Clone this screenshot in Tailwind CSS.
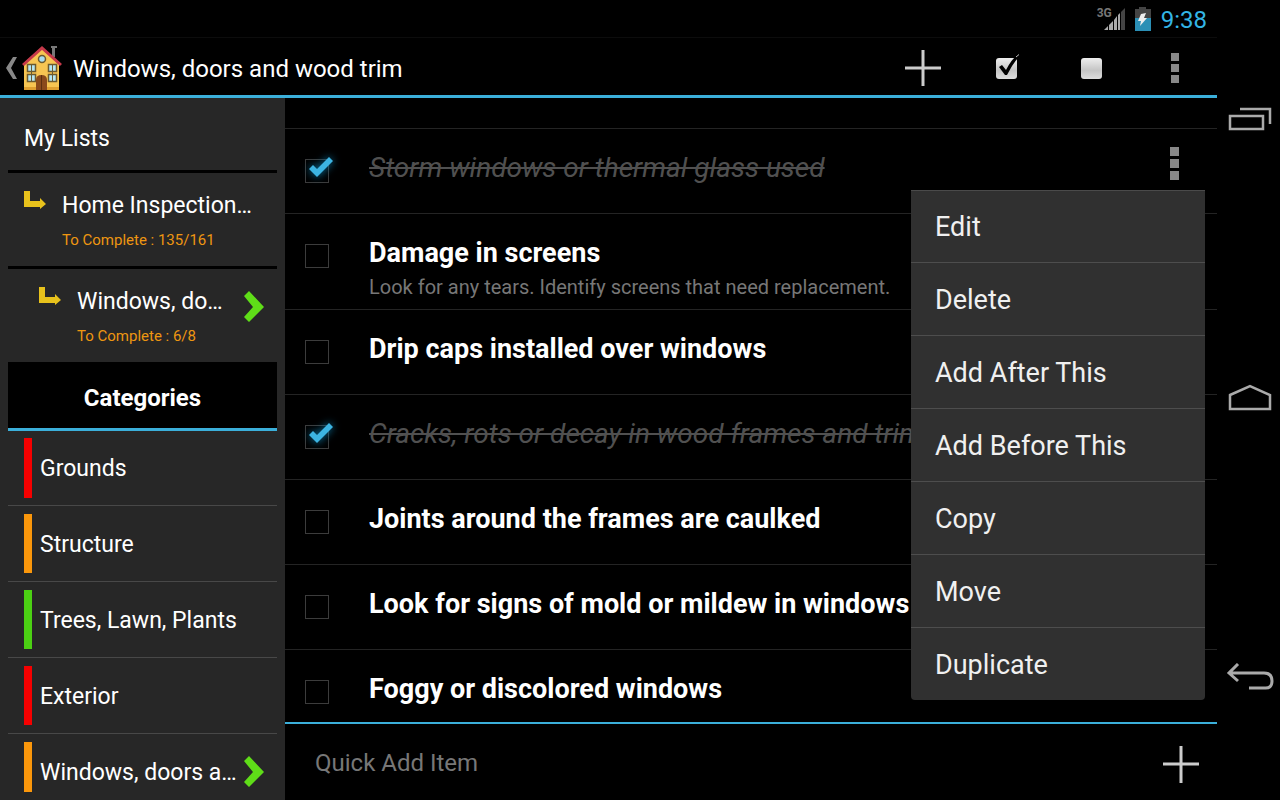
<!DOCTYPE html>
<html lang="en">
<head>
  <meta charset="UTF-8" />
  <meta name="viewport" content="width=device-width, initial-scale=1.0" />
  <title>Windows, doors and wood trim</title>
  <script src="https://cdn.jsdelivr.net/npm/@tailwindcss/browser@4"></script>
</head>
<body class="bg-black text-white font-['Roboto',sans-serif] h-screen flex overflow-hidden">

  <div class="flex-1 min-w-0 flex flex-col">
    <!-- Status bar -->
    <div class="h-[38px] shrink-0 flex items-center justify-end pr-[10px] border-b border-[#0c0c0c]">
      <span class="text-[12px] leading-3 font-bold text-[#777] self-start mt-[7px]">3G</span>
      <svg class="-ml-2 mr-[9px]" width="22" height="24" viewBox="0 0 22 24">
        <path d="M0 23 4 19V23ZM5 18 9 14V23H5ZM10 13 13 9V23H10ZM14 8 16 6V23H14Z" fill="#aaa" />
        <path d="M17 5 21 1V23H17Z" fill="#444" />
      </svg>
      <svg class="mr-[10px]" width="16" height="24" viewBox="0 0 16 24">
        <path d="M0 2H4V0H11V2H16V11H0Z" fill="#444" />
        <path d="M0 11H16V24H0Z" fill="#2b8fb5" />
        <path d="M6 7 11 6 9 11 12 11 5 19 6 14 3 14Z" fill="#eee" />
      </svg>
      <time class="pt-[3px] text-[24px] leading-6 text-[#33b5e5]">9:38</time>
    </div>

    <!-- App bar -->
    <header class="h-[60px] shrink-0 pt-[3px] flex items-center border-b-3 border-[#3bafda]">
      <button aria-label="Back" class="flex items-center pl-[6px] gap-[5px]">
        <svg width="11" height="22" viewBox="0 0 11 22">
          <path d="M7 0H11L5 11 11 22H7L0 11Z" fill="#888" />
        </svg>
        <svg width="41" height="46" viewBox="0 0 41 46">
          <path d="M29 1H35V3H33V12H30V3H29Z" fill="#777" />
          <path d="M20 2 37 18V45H2V18Z" fill="#f7c552" />
          <path d="M2 42H37V45H2Z" fill="#e0a030" />
          <path d="M1 20 20 3 39 20" fill="none" stroke="#c5394a" stroke-width="3" />
          <circle cx="20" cy="14" r="3.5" fill="#a8dcf0" stroke="#6b5a30" stroke-width="1.5" />
          <path d="M5.500 19.500H13.500V26.500H5.500ZM26.500 19.500H34.500V26.500H26.500ZM5.500 29.500H13.500V36.500H5.500ZM26.500 29.500H34.500V36.500H26.500Z" fill="#b5e6f2" stroke="#6b5a30" stroke-width="1.500" />
          <path d="M9.500 20V36M30.500 20V36" stroke="#6b5a30" />
          <path d="M14 45V35Q14 30 19.500 30T25 35V45Z" fill="#8a4a1c" />
          <path d="M19.500 30V45" stroke="#5d2f10" />
        </svg>
      </button>
      <h1 class="flex-1 ml-[10px] pt-[2px] text-[24px] leading-7 whitespace-nowrap">Windows, doors and wood trim</h1>
      <button aria-label="Add" class="w-[84px] h-full flex items-center justify-center">
        <svg width="36" height="36" viewBox="0 0 36 36"><path d="M18 0V36M0 18H36" stroke="#ccc" stroke-width="3" /></svg>
      </button>
      <button aria-label="Check all" class="w-[84px] h-full flex items-center justify-center">
        <svg class="mb-1" width="26" height="26" viewBox="0 0 26 26">
          <defs>
            <linearGradient id="box" x1="0" y1="0" x2="0" y2="1">
              <stop offset="0" stop-color="#eee" /><stop offset="0.600" stop-color="#c4c4c4" /><stop offset="1" stop-color="#ddd" />
            </linearGradient>
          </defs>
          <rect x="2" y="5" width="21" height="21" rx="3" fill="url(#box)" />
          <path d="M5 14 8 12 12 17Q17 7 24 1L26 2Q19 10 13 22H11Z" fill="#000" />
          <path d="M22 4 25 1.500" stroke="#bbb" />
        </svg>
      </button>
      <button aria-label="Uncheck all" class="w-[84px] h-full flex items-center justify-center">
        <svg width="21" height="21" viewBox="0 0 21 21"><rect width="21" height="21" rx="3" fill="url(#box)" /></svg>
      </button>
      <button aria-label="More" class="w-[84px] h-full flex items-center justify-center">
        <svg width="8" height="30" viewBox="0 0 8 30"><path d="M0 0H8V8H0ZM0 11H8V19H0ZM0 22H8V30H0Z" fill="#888" /></svg>
      </button>
    </header>

    <div class="flex-1 min-h-0 flex">
      <!-- Sidebar -->
      <aside class="w-[285px] shrink-0 bg-[#272727] px-2 flex flex-col overflow-hidden whitespace-nowrap text-[23px] leading-7">
        <h2 class="h-[75px] shrink-0 border-b-3 border-black px-4 pt-[27px]">My Lists</h2>
        <a href="#" class="h-24 shrink-0 border-b-3 border-black flex items-start pl-4 gap-4">
          <svg class="mt-[18px]" width="22" height="18" viewBox="0 0 22 18"><path d="M0 0H6V10H16V7L22 13 16 18V16H0Z" fill="#e8c21c" /></svg>
          <span class="pt-[19px]">
            <span class="block">Home Inspection…</span>
            <span class="block mt-[10px] text-[15px] leading-5 text-[#ee9611]">To Complete : 135/161</span>
          </span>
        </a>
        <a href="#" class="h-[93px] shrink-0 flex items-start pl-[31px] gap-4">
          <svg class="mt-[18px] shrink-0" width="22" height="18" viewBox="0 0 22 18"><path d="M0 0H6V10H16V7L22 13 16 18V16H0Z" fill="#e8c21c" /></svg>
          <span class="flex-1 pt-[19px]">
            <span class="block">Windows, do…</span>
            <span class="block mt-[10px] text-[15px] leading-5 text-[#ee9611]">To Complete : 6/8</span>
          </span>
          <svg class="mt-[22px] mr-3 -ml-4 shrink-0" width="22" height="32" viewBox="0 0 22 32"><path d="M1 5 6 0 21 16 6 31 1 26 10 16Z" fill="#5fdd18" /></svg>
        </a>
        <h2 class="h-[69px] shrink-0 bg-black border-b-3 border-[#3bafda] flex items-center justify-center pt-[5px] text-[24px] font-bold">Categories</h2>
        <a href="#" class="h-[75px] shrink-0 border-b border-[#484848] pl-4 flex gap-2">
          <span class="w-2 shrink-0 my-[7px] bg-[#f60000]"></span>
          <span class="pt-6">Grounds</span>
        </a>
        <a href="#" class="h-[76px] shrink-0 border-b border-[#484848] pl-4 flex gap-2">
          <span class="w-2 shrink-0 my-2 bg-[#fb970b]"></span>
          <span class="pt-[25px]">Structure</span>
        </a>
        <a href="#" class="h-[76px] shrink-0 border-b border-[#484848] pl-4 flex gap-2">
          <span class="w-2 shrink-0 my-2 bg-[#4bd013]"></span>
          <span class="pt-[25px]">Trees, Lawn, Plants</span>
        </a>
        <a href="#" class="h-[76px] shrink-0 border-b border-[#484848] pl-4 flex gap-2">
          <span class="w-2 shrink-0 my-2 bg-[#f60000]"></span>
          <span class="pt-[25px]">Exterior</span>
        </a>
        <a href="#" class="min-h-[66px] max-h-[76px] flex-1 pl-4 flex gap-2">
          <span class="w-2 shrink-0 my-2 bg-[#fb970b]"></span>
          <span class="flex-1 pt-[25px]">Windows, doors a…</span>
          <svg class="mt-[22px] mr-3 -ml-2 shrink-0" width="22" height="32" viewBox="0 0 22 32"><path d="M1 5 6 0 21 16 6 31 1 26 10 16Z" fill="#5fdd18" /></svg>
        </a>
      </aside>

      <!-- Items -->
      <main class="flex-1 min-w-0 flex flex-col">
        <ul class="flex-1 min-h-0 overflow-hidden">
          <li class="h-[31px] border-b border-[#242424]"></li>
          <li class="relative h-[85px] border-b border-[#242424]">
            <label class="flex items-start pl-5 gap-10">
              <span class="relative mt-[30px]">
                <input type="checkbox" checked class="block appearance-none w-6 h-6 border border-[#3c3c3c]" />
                <svg class="absolute left-1 -top-[2px] drop-shadow-[0_0_4px_#0a7fb0]" width="25" height="22" viewBox="0 0 25 22"><path d="M0 12 4 8 8 12 20 0 24 4 8 20Z" fill="#3cb4e2" /></svg>
              </span>
              <span class="pt-[23px] text-[28px] leading-8 italic line-through decoration-2 text-[#505050] whitespace-nowrap">Storm windows or thermal glass used</span>
            </label>
            <button aria-label="Item menu" class="absolute right-[38px] top-[18px]">
              <svg width="9" height="33" viewBox="0 0 9 33"><path d="M0 0H9V9H0ZM0 12H9V21H0ZM0 24H9V33H0Z" fill="#888" /></svg>
            </button>
            <!-- Item menu -->
            <div class="absolute z-10 right-3 top-[61px] w-[294px] bg-[#303030] border-t border-[#4a4a4a] rounded-b-sm divide-y divide-[#4d4d4d] text-[27px] text-[#f0f0f0]">
              <button class="block w-full h-[72px] pt-[2px] px-6 text-left">Edit</button>
              <button class="block w-full h-[73px] pt-[2px] px-6 text-left">Delete</button>
              <button class="block w-full h-[73px] pt-[2px] px-6 text-left">Add After This</button>
              <button class="block w-full h-[73px] pt-[2px] px-6 text-left">Add Before This</button>
              <button class="block w-full h-[73px] pt-[2px] px-6 text-left">Copy</button>
              <button class="block w-full h-[73px] pt-[2px] px-6 text-left">Move</button>
              <button class="block w-full h-[72px] pt-[2px] px-6 text-left">Duplicate</button>
            </div>
          </li>
          <li class="h-24 border-b border-[#242424]">
            <label class="flex items-start pl-5 gap-10">
              <input type="checkbox" class="block appearance-none w-6 h-6 mt-[30px] border border-[#3c3c3c]" />
              <span class="pt-[23px] whitespace-nowrap">
                <span class="block text-[27px] leading-8 font-bold">Damage in screens</span>
                <span class="block mt-[6px] text-[20px] leading-6 text-[#777]">Look for any tears. Identify screens that need replacement.</span>
              </span>
            </label>
          </li>
          <li class="h-[85px] border-b border-[#242424]">
            <label class="flex items-start pl-5 gap-10">
              <input type="checkbox" class="block appearance-none w-6 h-6 mt-[30px] border border-[#3c3c3c]" />
              <span class="pt-[23px] text-[27px] leading-8 font-bold whitespace-nowrap">Drip caps installed over windows</span>
            </label>
          </li>
          <li class="h-[85px] border-b border-[#242424]">
            <label class="flex items-start pl-5 gap-10">
              <span class="relative mt-[30px]">
                <input type="checkbox" checked class="block appearance-none w-6 h-6 border border-[#3c3c3c]" />
                <svg class="absolute left-1 -top-[2px] drop-shadow-[0_0_4px_#0a7fb0]" width="25" height="22" viewBox="0 0 25 22"><path d="M0 12 4 8 8 12 20 0 24 4 8 20Z" fill="#3cb4e2" /></svg>
              </span>
              <span class="pt-[23px] text-[28px] leading-8 italic line-through decoration-2 text-[#505050] whitespace-nowrap">Cracks, rots or decay in wood frames and trim</span>
            </label>
          </li>
          <li class="h-[85px] border-b border-[#242424]">
            <label class="flex items-start pl-5 gap-10">
              <input type="checkbox" class="block appearance-none w-6 h-6 mt-[30px] border border-[#3c3c3c]" />
              <span class="pt-[23px] text-[27px] leading-8 font-bold whitespace-nowrap">Joints around the frames are caulked</span>
            </label>
          </li>
          <li class="h-[85px] border-b border-[#242424]">
            <label class="flex items-start pl-5 gap-10">
              <input type="checkbox" class="block appearance-none w-6 h-6 mt-[30px] border border-[#3c3c3c]" />
              <span class="pt-[23px] text-[27px] leading-8 font-bold whitespace-nowrap">Look for signs of mold or mildew in windows</span>
            </label>
          </li>
          <li class="h-[85px] border-b border-[#242424]">
            <label class="flex items-start pl-5 gap-10">
              <input type="checkbox" class="block appearance-none w-6 h-6 mt-[30px] border border-[#3c3c3c]" />
              <span class="pt-[23px] text-[27px] leading-8 font-bold whitespace-nowrap">Foggy or discolored windows</span>
            </label>
          </li>
        </ul>
        <form class="h-[78px] shrink-0 border-t-2 border-[#3bafda] flex items-center pl-[30px] pr-[18px]">
          <input type="text" aria-label="Quick Add Item" placeholder="Quick Add Item" class="flex-1 min-w-0 h-14 pt-[2px] text-[24px] placeholder:text-[#777] outline-none" />
          <button type="button" aria-label="Add item" class="pt-1">
            <svg width="36" height="37" viewBox="0 0 36 37"><path d="M18 0V37M0 18H36" stroke="#ccc" stroke-width="3" /></svg>
          </button>
        </form>
      </main>
    </div>
  </div>

  <!-- System navigation -->
  <nav class="w-[63px] shrink-0 flex flex-col items-center justify-between pt-[107px] pb-[109px] pl-[2px]">
    <button aria-label="Recent apps">
      <svg width="44" height="26" viewBox="0 0 44 26" fill="none" stroke="#aaa" stroke-width="2.500"><path d="M12 2H42V17M2 9H35V22H2Z" /></svg>
    </button>
    <button aria-label="Home">
      <svg width="44" height="28" viewBox="0 0 44 28" fill="none" stroke="#aaa" stroke-width="2.500"><path d="M2 11 22 2 42 11V25H2Z" /></svg>
    </button>
    <button aria-label="Back">
      <svg width="48" height="28" viewBox="0 0 48 28" fill="none" stroke="#aaa" stroke-width="3"><path d="M12 1 3 10 12 18M3 10H38Q46 10 46 18T38 25H23" /></svg>
    </button>
  </nav>

</body>
</html>
